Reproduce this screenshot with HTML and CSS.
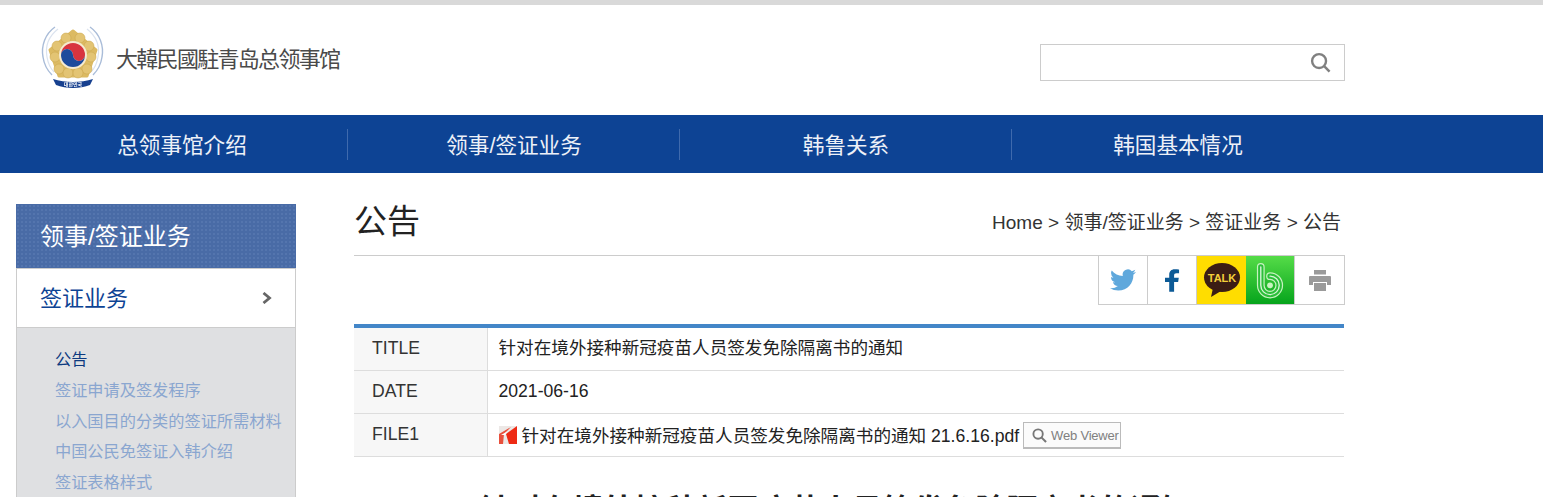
FILE: index.html
```html
<!DOCTYPE html>
<html lang="zh-CN">
<head>
<meta charset="utf-8">
<title>公告</title>
<link rel="stylesheet" href="styles.css">
</head>
<body class="page">
<header class="site-header">
  <a class="logo" href="#">
    <svg class="logo-mark" viewBox="0 0 62 62" aria-hidden="true">
      <path d="M13 1C3 8-1 20 1 31c1 7 4 13 9 18" fill="none" stroke="#a9bcd8" stroke-width="1.400"/>
      <path d="M16 3C7 10 3 20 5 31c1 6 3 11 7 15" fill="none" stroke="#dbe3ef" stroke-width="1.200"/>
      <path d="M48 1c10 7 14 19 12 30-1 7-4 13-9 18" fill="none" stroke="#a9bcd8" stroke-width="1.400"/>
      <path d="M45 3c9 7 13 17 11 28-1 6-3 11-7 15" fill="none" stroke="#dbe3ef" stroke-width="1.200"/>
      <path d="M31 5 54 24 45 50H17L8 24z" fill="#dcba62" stroke="#dcba62" stroke-width="3" stroke-linejoin="round"/>
      <g fill="#e3c473" stroke="#c8a54c" stroke-width=".5">
        <circle cx="24" cy="12" r="5"/><circle cx="38" cy="12" r="5"/>
        <circle cx="15" cy="20" r="5"/><circle cx="47" cy="20" r="5"/>
        <circle cx="13" cy="31" r="5"/><circle cx="49" cy="31" r="5"/>
        <circle cx="17" cy="43" r="5"/><circle cx="45" cy="43" r="5"/>
        <circle cx="26" cy="47" r="5"/><circle cx="36" cy="47" r="5"/>
      </g>
      <circle cx="31" cy="29" r="14" fill="#f5ead0"/>
      <path d="M19 29a12 12 0 0 1 24 0 6 6 0 0 1-12 0 6 6 0 0 0-12 0z" fill="#d8343f"/>
      <path d="M19 29a6 6 0 0 1 12 0 6 6 0 0 0 12 0 12 12 0 0 1-24 0z" fill="#1d4a9c"/>
      <path d="M11 53c6 2 13 3 20 3s14-1 20-3l-3 6c-5 2-11 3-17 3s-12-1-17-3z" fill="#17408f"/>
      <text class="logo-motto" x="31" y="60" text-anchor="middle">대한민국</text>
    </svg>
    <span class="logo-text">大韓民國駐青岛总领事馆</span>
  </a>
  <form class="search">
    <input class="search-input" type="text" aria-label="搜索">
    <svg class="search-icon" viewBox="0 0 22 22" aria-hidden="true">
      <circle cx="9.500" cy="9.500" r="7.300" fill="none" stroke="#808080" stroke-width="2.500"/>
      <path d="M14.800 14.800 20.500 20.500" stroke="#808080" stroke-width="2.600"/>
    </svg>
  </form>
</header>

<nav class="gnb">
  <a class="gnb-item" href="#">总领事馆介绍</a>
  <a class="gnb-item" href="#">领事/签证业务</a>
  <a class="gnb-item" href="#">韩鲁关系</a>
  <a class="gnb-item" href="#">韩国基本情况</a>
</nav>

<div class="layout">
  <aside class="sidebar">
    <h2 class="side-title">领事/签证业务</h2>
    <div class="side-box">
      <a class="side-current" href="#">签证业务
        <svg class="chevron" viewBox="0 0 10 12" aria-hidden="true"><path d="M1.500 1 7.500 6 1.500 11" fill="none" stroke="#666" stroke-width="2.800"/></svg>
      </a>
      <ul class="side-list">
        <li class="side-link is-active">公告</li>
        <li class="side-link">签证申请及签发程序</li>
        <li class="side-link">以入国目的分类的签证所需材料</li>
        <li class="side-link">中国公民免签证入韩介绍</li>
        <li class="side-link">签证表格样式</li>
      </ul>
    </div>
  </aside>

  <main class="content">
    <div class="title-row">
      <h1 class="page-title">公告</h1>
      <div class="breadcrumb">Home &gt; 领事/签证业务 &gt; 签证业务 &gt; 公告</div>
    </div>
    <div class="share-row">
      <a class="share share-first" href="#" aria-label="Twitter">
        <svg class="ico-tw" viewBox="0 0 24 24"><path fill="#5fa8dc" d="M23.950 4.570a10 10 0 0 1-2.820.77 4.960 4.960 0 0 0 2.160-2.720c-.95.56-2 .96-3.120 1.190a4.920 4.920 0 0 0-8.380 4.480C7.690 8.100 4.070 6.130 1.640 3.160a4.820 4.820 0 0 0-.67 2.480 4.900 4.900 0 0 0 2.190 4.100 4.900 4.900 0 0 1-2.230-.62v.06a4.920 4.920 0 0 0 3.950 4.830 5 5 0 0 1-2.210.08 4.940 4.940 0 0 0 4.600 3.420A9.870 9.870 0 0 1 0 19.540a14 14 0 0 0 7.560 2.210c9.050 0 14-7.500 14-13.980 0-.21 0-.42-.02-.63a9.940 9.940 0 0 0 2.460-2.550z"/></svg>
      </a>
      <a class="share" href="#" aria-label="Facebook">
        <svg class="ico-fb" viewBox="0 0 16 24"><path fill="#0c5a96" d="M4.500 24V13.500H0V9h4.500V6C4.500 2.200 6.800 0 10.200 0c1.900 0 3.800.2 4.800.3v4h-2.700c-2 0-2.600 1-2.600 2.300V9h5l-.7 4.500H9.700V24z"/></svg>
      </a>
      <a class="share share-kakao" href="#" aria-label="KakaoTalk">
        <svg class="ico-kakao" viewBox="0 0 38 36">
          <ellipse cx="19" cy="15.500" rx="18" ry="14.500" fill="#3b1d14"/>
          <path d="M10 26 8 35 18 29z" fill="#3b1d14"/>
          <text class="kakao-text" x="19" y="20" text-anchor="middle">TALK</text>
        </svg>
      </a>
      <a class="share share-band" href="#" aria-label="Band">
        <svg class="ico-band" viewBox="0 0 34 38">
          <g fill="none" stroke-linecap="round">
            <path class="band-a" d="M7 5V24a9.500 9.500 0 1 0 9.500-9.500"/>
            <path class="band-b" d="M7 5V24a9.500 9.500 0 1 0 9.500-9.500"/>
            <path class="band-c" d="M7 5V24a9.500 9.500 0 1 0 9.500-9.500"/>
          </g>
          <circle cx="16.500" cy="24" r="3" fill="#c8f2c0"/>
        </svg>
      </a>
      <a class="share share-wide" href="#" aria-label="Print">
        <svg class="ico-print" viewBox="0 0 22 21">
          <path fill="#9a9a9a" d="M5 0h12v4.500H5zM1 6h20a1 1 0 0 1 1 1v8h-4v-3H4v3H0V7a1 1 0 0 1 1-1zM5 13h12v8H5z"/>
        </svg>
      </a>
    </div>

    <table class="info">
      <tr class="info-row info-row-first"><th class="info-head">TITLE</th><td class="info-cell info-cell-cjk">针对在境外接种新冠疫苗人员签发免除隔离书的通知</td></tr>
      <tr class="info-row"><th class="info-head">DATE</th><td class="info-cell">2021-06-16</td></tr>
      <tr class="info-row"><th class="info-head">FILE1</th><td class="info-cell">
        <span class="file-line">
          <svg class="ico-pdf" viewBox="0 0 18 18" aria-hidden="true">
            <rect width="18" height="18" fill="#ece8e6"/>
            <path d="M7 8 18 0v18h-8z" fill="#ee2a14"/>
            <path d="M0 8 12 1 5 8 4 18H0z" fill="#e8503c"/>
            <path d="M2 9 9 5 6 9z" fill="#fff"/>
          </svg>
          <a class="file-name" href="#">针对在境外接种新冠疫苗人员签发免除隔离书的通知 21.6.16.pdf</a>
          <a class="viewer" href="#">
            <svg class="ico-viewer" viewBox="0 0 16 16" aria-hidden="true"><circle cx="6.500" cy="6.500" r="5" fill="none" stroke="#777" stroke-width="2"/><path d="M10 10 15 15" stroke="#777" stroke-width="2.200"/></svg>
            <span class="viewer-text">Web Viewer</span>
          </a>
        </span>
      </td></tr>
    </table>

    <h3 class="article-title">针对在境外接种新冠疫苗人员签发免除隔离书的通知</h3>
  </main>
</div>
</body>
</html>
```
FILE: styles.css
```css
* { box-sizing: border-box; }
html, body { margin: 0; padding: 0; }
.page {
  height: 497px;
  overflow: hidden;
  background: #fff;
  border-top: 5px solid #d9d9d9;
  color: #222;
  font-family: "Liberation Sans", "Noto Sans CJK SC", Arial, sans-serif;
}
a { color: inherit; text-decoration: none; }

.site-header {
  display: flex;
  align-items: flex-start;
  justify-content: space-between;
  height: 110px;
  padding: 21px 198px 0 42px;
}
.logo { display: flex; align-items: center; gap: 12px; }
.logo-mark { width: 62px; height: 62px; flex: none; filter: blur(.35px); overflow: visible; }
.logo-motto { font: 700 5px "Noto Sans CJK KR", sans-serif; fill: #fff; }
.logo-text {
  font-size: 22px;
  letter-spacing: -1.7px;
  color: #4a4a4a;
  white-space: nowrap;
}
.search {
  position: relative;
  width: 305px;
  height: 37px;
  margin-top: 18px;
  border: 1px solid #ccc;
}
.search-input { width: 100%; height: 100%; border: 0; padding: 0 40px 0 8px; background: transparent; }
.search-icon { position: absolute; top: 7px; right: 13px; width: 21px; height: 21px; }

.gnb {
  display: flex;
  height: 58px;
  padding-left: 15px;
  background: #0d4394;
}
.gnb-item {
  display: flex;
  align-items: center;
  justify-content: center;
  width: 332px;
  position: relative;
  padding: 0 0 2px 2px;
  color: #edf1f8;
  font-size: 21.6px;
}
.gnb-item + .gnb-item::before {
  content: "";
  position: absolute;
  left: 0;
  top: 14px;
  height: 31px;
  border-left: 1px solid #3f6aad;
}

.layout {
  display: flex;
  gap: 58px;
  padding: 31px 0 0 16px;
}
.sidebar { width: 280px; flex: none; }
.side-title {
  height: 64px;
  margin: 0;
  padding-left: 24px;
  line-height: 65px;
  font-size: 24px;
  font-weight: 400;
  color: #fff;
  background-color: #496ba6;
  background-image: radial-gradient(#5475ae 1px, transparent 1px);
  background-size: 4px 4px;
}
.side-box { border: 1px solid #ccc; border-top: 1px solid #ccc; }
.side-current {
  display: flex;
  align-items: center;
  justify-content: space-between;
  height: 59px;
  padding: 0 23px 4px 23px;
  font-size: 22px;
  color: #0d4394;
  background: #fff;
  border-bottom: 1px solid #ccc;
}
.chevron { width: 10px; height: 12px; margin-top: 4px; }
.side-list {
  margin: 0;
  padding: 16px 0 20px 38px;
  list-style: none;
  background: #dfe0e2;
}
.side-link {
  line-height: 30.75px;
  font-size: 16.2px;
  color: #8aa6d0;
  white-space: nowrap;
}
.side-link.is-active { color: #0d3a80; }

.content { width: 990px; flex: none; }
.title-row {
  display: flex;
  align-items: center;
  justify-content: space-between;
  height: 51px;
  padding: 0 3px 21px 0;
}
.page-title { margin: 0; font-size: 33px; font-weight: 400; color: #222; }
.breadcrumb { font-size: 19px; color: #333; margin-top: 3px; }

.share-row {
  display: flex;
  justify-content: flex-end;
  height: 50px;
  margin-right: -1px;
  border-top: 1px solid #ccc;
}
.share {
  display: flex;
  align-items: center;
  justify-content: center;
  width: 49px;
  border-bottom: 1px solid #ccc;
  border-right: 1px solid #ccc;
}
.share-first { border-left: 1px solid #ccc; width: 50px; }
.share-wide { width: 50px; }
.share-kakao { background: #ffdd00; border-right: 0; }
.share-band { width: 49px; background: linear-gradient(#55dc48, #06a41c); }
.ico-tw { width: 26px; height: 26px; }
.ico-fb { width: 15px; height: 23px; }
.ico-kakao { width: 38px; height: 36px; }
.kakao-text { font: 700 11px "Liberation Sans", sans-serif; fill: #f3cf3a; }
.ico-band { width: 33px; height: 37px; }
.band-a { stroke: #c8f2c0; stroke-width: 8; }
.band-b { stroke: #2cbf3a; stroke-width: 5.500; }
.band-c { stroke: #d6f5d6; stroke-width: 1.400; }
.ico-print { width: 22px; height: 21px; }

.info {
  width: 100%;
  margin-top: 19px;
  border-collapse: collapse;
  border-top: 4px solid #4386c8;
  font-size: 17.6px;
}
.info-row { height: 43px; border-bottom: 1px solid #ddd; }
.info-row-first { height: 44px; }
.info-head {
  width: 133px;
  padding: 0 0 0 18px;
  text-align: left;
  font-weight: 400;
  background: #f7f7f7;
  border-right: 1px solid #ddd;
  color: #333;
}
.info-cell { padding: 0 0 0 11px; color: #222; }
.info-cell-cjk { padding-bottom: 4px; }
.file-line { display: flex; align-items: center; }
.ico-pdf { width: 18px; height: 18px; margin-right: 5px; flex: none; }
.file-name { white-space: nowrap; }
.viewer {
  display: flex;
  align-items: center;
  gap: 4px;
  width: 98px;
  height: 27px;
  margin: 2px 0 0 4px;
  padding-left: 8px;
  border: 1px solid #bbb;
  border-bottom-width: 2px;
  background: #fbfbfb;
}
.ico-viewer { width: 15px; height: 15px; flex: none; }
.viewer-text { font-size: 13px; color: #808080; font-weight: 400; letter-spacing: -.2px; white-space: nowrap; }

.article-title {
  margin: 28px 0 0;
  padding-right: 26px;
  text-align: center;
  font-size: 31px;
  font-weight: 700;
  color: #222;
  white-space: nowrap;
}
```
